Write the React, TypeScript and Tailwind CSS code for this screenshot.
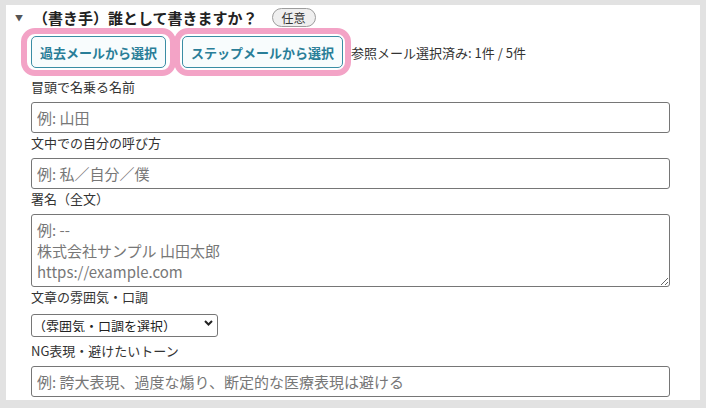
const FONT = "font-['Noto_Sans_CJK_JP','Noto_Sans',sans-serif]";

const LABEL_CLASS = 'block text-[13px] leading-[20px] text-[#333]';

const INPUT_CLASS =
  'block w-[639px] h-[31px] border border-[#767676] rounded-[3px] bg-white px-[5px] text-[15px] text-[#222] placeholder-[#777] outline-none';

function PinkFrame({ children, className }: { children: React.ReactNode; className: string }) {
  return <div className={`border-[6px] border-[#f3a3c6] rounded-[14px] py-[2px] ${className}`}>{children}</div>;
}

function SelectButton({ label }: { label: string }) {
  return (
    <button className="h-[32px] px-2 border border-[#3a8da4] rounded-[5px] bg-[#f8fcfd] text-[13px] font-bold text-[#2a7e98] leading-none">
      {label}
    </button>
  );
}

export default function App() {
  return (
    <div className={`w-[706px] h-[408px] bg-[#e2e2e2] pt-[5px] pl-[6px] ${FONT}`}>
      <div className="w-[694px] h-[395px] bg-white pl-[9px]">

        {/* Header */}
        <div className="flex items-center h-[19px] pt-[3px] box-content">
          <span className="text-[8px] text-[#555] leading-none w-[18px]">▼</span>
          <h2 className="text-[15px] font-bold text-[#222] leading-none">（書き手）誰として書きますか？</h2>
          <span className="ml-[14px] h-[19px] px-[9px] flex items-center rounded-full border border-[#9c9c9c] bg-[#efefef] text-[12px] text-[#333] leading-none">
            任意
          </span>
        </div>

        {/* Reference mail buttons */}
        <div className="flex items-center ml-[6px] mt-[1px]">
          <PinkFrame className="px-[4px]">
            <SelectButton label="過去メールから選択" />
          </PinkFrame>
          <PinkFrame className="px-[2px] -ml-[2px]">
            <SelectButton label="ステップメールから選択" />
          </PinkFrame>
          <span className="text-[13px] text-[#333] leading-none">参照メール選択済み: 1件 / 5件</span>
        </div>

        {/* Fields */}
        <div className="ml-[16px] mt-[1px]">
          <label className={LABEL_CLASS}>冒頭で名乗る名前</label>
          <input type="text" className={`mt-[5px] ${INPUT_CLASS}`} placeholder="例: 山田" />

          <label className={LABEL_CLASS}>文中での自分の呼び方</label>
          <input type="text" className={`mt-[5px] ${INPUT_CLASS}`} placeholder="例: 私／自分／僕" />

          <label className={LABEL_CLASS}>署名（全文）</label>
          <textarea
            className="mt-[5px] block w-[639px] h-[73px] border border-[#767676] rounded-[3px] bg-white px-[5px] pt-[4px] text-[15px] leading-[21px] text-[#222] placeholder-[#777] outline-none"
            placeholder={'例: --\n株式会社サンプル 山田太郎\nhttps://example.com'}
          />

          <label className={LABEL_CLASS}>文章の雰囲気・口調</label>
          <div className="relative mt-[5px] w-[187px] h-[23px]">
            <select className="appearance-none w-full h-full border border-[#767676] rounded-[3px] bg-white pl-[1px] text-[13px] text-[#222] leading-none outline-none">
              <option>（雰囲気・口調を選択）</option>
            </select>
            <svg
              className="absolute right-[5px] top-[8px] pointer-events-none"
              width="9"
              height="6"
              viewBox="0 0 9 6"
              fill="none"
            >
              <path d="M1 1l3.5 3.5L8 1" stroke="#222" strokeWidth="2" />
            </svg>
          </div>

          <label className={`mt-[6px] ${LABEL_CLASS}`}>NG表現・避けたいトーン</label>
          <input
            type="text"
            className={`mt-[5px] ${INPUT_CLASS}`}
            placeholder="例: 誇大表現、過度な煽り、断定的な医療表現は避ける"
          />
        </div>
      </div>
    </div>
  );
}
